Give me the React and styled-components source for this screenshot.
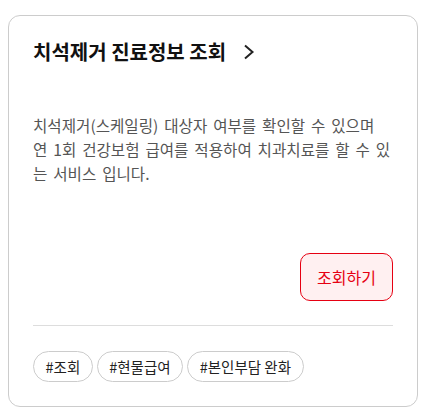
import React from "react";
import styled, { createGlobalStyle } from "styled-components";

const GlobalStyle = createGlobalStyle`
  body {
    margin: 0;
    background: #fff;
    font-family: "Noto Sans CJK KR", "Noto Sans", sans-serif;
  }
`;

const tags = ["#조회", "#현물급여", "#본인부담 완화"];

const App = () => {
  return (
    <>
      <GlobalStyle />
      <Page>
        <Card>
          <Title>
            치석제거 진료정보 조회
            <svg width="12" height="18" viewBox="0 0 12 18" fill="none">
              <path d="M2 2.5l7.5 6.5-7.5 6.5" stroke="#222" strokeWidth="2" />
            </svg>
          </Title>
          <Description>
            치석제거(스케일링) 대상자 여부를 확인할 수 있으며 연 1회 건강보험
            급여를 적용하여 치과치료를 할 수 있는 서비스 입니다.
          </Description>
          <Actions>
            <LookupButton>조회하기</LookupButton>
          </Actions>
          <Divider />
          <TagList>
            {tags.map((t) => (
              <Tag key={t}>{t}</Tag>
            ))}
          </TagList>
        </Card>
      </Page>
    </>
  );
};

export default App;

const Page = styled.div`
  padding: 15px 11px 0 8px;
`;

const Card = styled.div`
  width: 410px;
  box-sizing: border-box;
  border: 1px solid #ccc;
  border-radius: 12px;
  padding: 23px 24px 24px 24px;
  display: flex;
  flex-direction: column;
`;

const Title = styled.h2`
  margin: 0;
  display: flex;
  align-items: center;
  gap: 17px;
  font-size: 20px;
  font-weight: 700;
  line-height: 26px;
  color: #111;
`;

const Description = styled.p`
  margin: 48px 0 0;
  font-size: 15.6px;
  line-height: 24px;
  word-spacing: 2.4px;
  color: #555;
  word-break: break-all;
`;

const Actions = styled.div`
  display: flex;
  justify-content: flex-end;
  margin-top: 68px;
`;

const LookupButton = styled.button`
  width: 93px;
  height: 48px;
  border: 1px solid #e60012;
  border-radius: 10px;
  background: #fff0f1;
  color: #e60012;
  font-family: inherit;
  font-size: 16px;
  cursor: pointer;
`;

const Divider = styled.hr`
  margin: 24px 0 25px;
  border: none;
  border-top: 1px solid #ddd;
`;

const TagList = styled.div`
  display: flex;
  gap: 4px;
`;

const Tag = styled.span`
  height: 31px;
  box-sizing: border-box;
  padding: 0 11.5px;
  display: flex;
  align-items: center;
  border: 1px solid #ccc;
  border-radius: 16px;
  font-size: 14.5px;
  color: #222;
`;
